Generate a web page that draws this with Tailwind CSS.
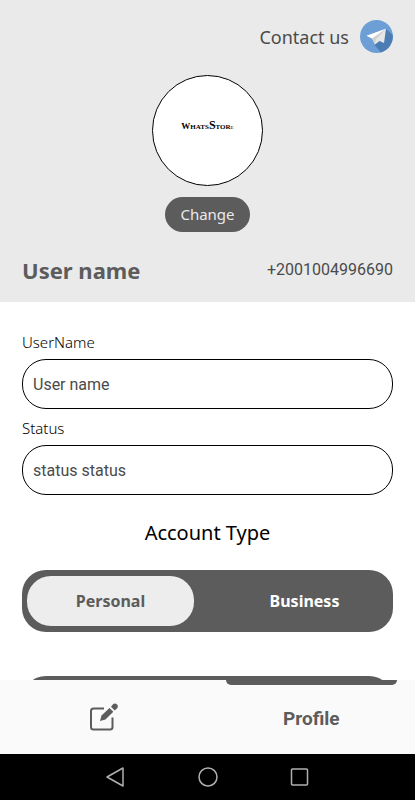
<!DOCTYPE html>
<html lang="en">
<head>
  <meta charset="UTF-8" />
  <meta name="viewport" content="width=device-width, initial-scale=1.0" />
  <title>Profile</title>
  <script src="https://cdn.jsdelivr.net/npm/@tailwindcss/browser@4"></script>
</head>
<body class="h-screen flex flex-col bg-white font-['Noto_Sans',sans-serif] text-black">

  <main class="flex-1 min-h-0 overflow-y-auto [scrollbar-width:none]">
    <!-- Header -->
    <header class="bg-[#eaeaea] px-[22px] pt-5 pb-4">
      <a href="#contact" class="flex items-center justify-end gap-[11px] text-lg leading-6 text-[#4a4a4a]">
        Contact us
        <svg class="size-[33px]" viewBox="0 0 33 33" aria-hidden="true">
          <circle cx="16.5" cy="16.5" r="16.5" fill="#6d9fd6" />
          <path d="M26 8.700 L32.700 15 A16.5 16.5 0 0 1 21 32.400 L14.500 25 Z" fill="#4b7db4" />
          <path d="M6.700 15.700 L26 8.700 L24 23 L19.500 21 L15 24.500 L12 18.500 Z" fill="#e6e6e6" />
          <path d="M6.700 15.700 L26 8.700 L12 18.500 Z" fill="#ffffff" />
          <path d="M12 18.500 L26 8.700 L15.500 20 L15 24.500 Z" fill="#cdcfd1" />
        </svg>
      </a>

      <div class="mt-[22px] flex flex-col items-center gap-[11px]">
        <div class="size-[111px] rounded-full border border-black bg-white flex items-center justify-center">
          <span class="pb-2 flex items-baseline font-['Liberation_Serif',serif] font-bold leading-4 text-[7px]">
            <span class="text-[9px]">W</span><span>HATS</span><span class="text-[12px]">S</span><span>TOR</span><span class="text-[5px] font-normal">E</span>
          </span>
        </div>
        <button type="button" class="h-[35px] rounded-full bg-[#5c5c5c] px-[15px] text-[15px] text-[#eaeaea]">Change</button>
      </div>

      <div class="mt-[22px] flex items-center justify-between">
        <h1 class="text-[22px] leading-8 font-bold text-[#5c5c5c]">User name</h1>
        <span class="font-[Roboto,sans-serif] text-base text-[#4a4a4a]">+2001004996690</span>
      </div>
    </header>

    <!-- Profile form -->
    <form class="px-[22px] pt-7">
      <label for="username" class="block text-[15px] leading-6 font-light">UserName</label>
      <input id="username" type="text" value="User name"
        class="mt-[5px] h-[50px] w-full rounded-3xl border border-black bg-white px-2.5 font-[Roboto,sans-serif] text-base text-[#4a4a4a] outline-none" />

      <label for="status" class="mt-[7px] block text-[15px] leading-6 font-light">Status</label>
      <input id="status" type="text" value="status status"
        class="mt-[5px] h-[50px] w-full rounded-3xl border border-black bg-white px-2.5 font-[Roboto,sans-serif] text-base text-[#4a4a4a] outline-none" />

      <fieldset class="mt-6">
        <legend class="w-full text-center text-xl leading-7">Account Type</legend>
        <div class="mt-[23px] flex h-[62px] rounded-3xl bg-[#5c5c5c] px-[5px] py-[6px]">
          <label class="flex flex-1 items-center justify-center rounded-3xl font-bold text-white has-checked:bg-[#ededed] has-checked:text-[#5c5c5c]">
            <input type="radio" name="account" value="personal" checked class="sr-only" />
            Personal
          </label>
          <label class="ml-[27px] flex flex-1 items-center justify-center rounded-3xl font-bold text-white has-checked:bg-[#ededed] has-checked:text-[#5c5c5c]">
            <input type="radio" name="account" value="business" class="sr-only" />
            Business
          </label>
        </div>
      </fieldset>

      <button type="submit" class="mt-11 mb-6 h-[62px] w-full rounded-3xl bg-[#5c5c5c] font-bold text-white">Save</button>
    </form>
  </main>

  <!-- Bottom tabs -->
  <nav class="grid h-[74px] shrink-0 grid-cols-2 bg-[#fafafa] text-[#5c5c5c]">
    <a href="#edit" aria-label="Edit" class="flex items-center justify-center">
      <svg class="size-7" viewBox="0 0 28 28" fill="none" aria-hidden="true">
        <path d="M14 5.500 H3.500 Q1 5.500 1 8 V24 Q1 26.500 3.500 26.500 H20 Q22.500 26.500 22.500 24 V14.500" stroke="currentColor" stroke-width="2" />
        <path d="M10 18 L11.500 12.500 L19.500 5 L23.300 8.800 L15.500 16.500 Z" fill="currentColor" />
        <path d="M21 3.700 L23.300 1 Q25 -0.300 27 1.500 Q28.500 3.200 27.300 5 L24.800 7.500 Z" fill="currentColor" />
      </svg>
    </a>
    <a href="#profile" class="flex flex-col items-center font-[Roboto,sans-serif] text-[19px] font-bold">
      <span class="h-[5px] w-[171px] rounded-b-md bg-[#5c5c5c]"></span>
      <span class="flex flex-1 items-center">Profile</span>
    </a>
  </nav>

  <!-- System navigation -->
  <div class="flex h-[46px] shrink-0 items-center justify-center gap-[72px] bg-black text-[#b0b0b0]">
    <button type="button" aria-label="Back">
      <svg class="size-5" viewBox="0 0 20 20" fill="none" stroke="currentColor" stroke-width="1.500" stroke-linejoin="round" aria-hidden="true">
        <path d="M17 1 V19 L1 10 Z" />
      </svg>
    </button>
    <button type="button" aria-label="Home">
      <svg class="size-5" viewBox="0 0 20 20" fill="none" stroke="currentColor" stroke-width="1.500" aria-hidden="true">
        <circle cx="10" cy="10" r="9" />
      </svg>
    </button>
    <button type="button" aria-label="Recent apps">
      <svg class="size-5" viewBox="0 0 20 20" fill="none" stroke="currentColor" stroke-width="1.500" aria-hidden="true">
        <rect x="1.500" y="2" width="16" height="16" rx="1" />
      </svg>
    </button>
  </div>

</body>
</html>
